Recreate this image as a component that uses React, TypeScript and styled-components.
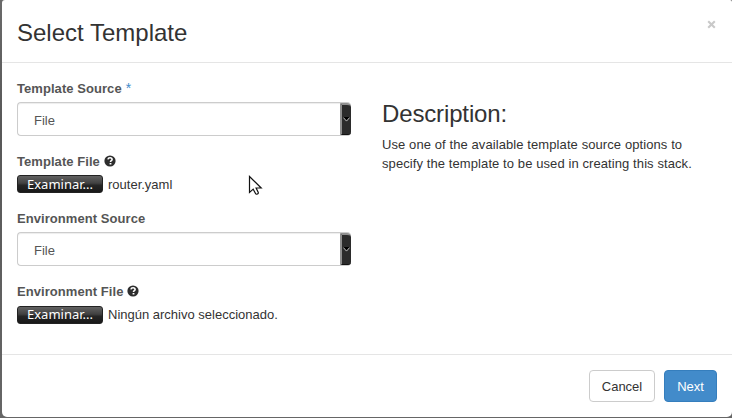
import React from "react";
import styled, { createGlobalStyle } from "styled-components";

const GlobalStyle = createGlobalStyle`
  * { box-sizing: border-box; }
  body {
    margin: 0;
    background: #666;
    font: 13px/19px "Liberation Sans", Arial, sans-serif;
    color: #333;
    overflow: hidden;
  }
`;

const Backdrop = styled.div`
  height: 418px;
  padding: 0 0 1px 2px;
  background: linear-gradient(#6a6a6a, #585858 30%, #666);
`;

const Modal = styled.section`
  position: relative;
  height: 417px;
  display: flex;
  flex-direction: column;
  background: #fff;
  border-radius: 3px 2px 5px 5px;
`;

const Header = styled.header`
  height: 63px;
  padding: 19px 15px 0;
  display: flex;
  justify-content: space-between;
  border-bottom: 1px solid #e5e5e5;
`;

const Title = styled.h3`
  margin: 0;
  font-size: 24px;
  line-height: 27px;
  font-weight: 400;
`;

const CloseButton = styled.button`
  width: 11px;
  height: 11px;
  margin: 0;
  padding: 0;
  border: 0;
  background: none;
  display: flex;
  align-items: center;
  justify-content: center;
`;

const Body = styled.div`
  height: 291px;
  padding: 16px 15px 0;
  display: grid;
  grid-template-columns: 335px 335px;
  column-gap: 30px;
`;

const Field = styled.div<{ $height: number }>`
  height: ${(p) => p.$height}px;
`;

const Label = styled.label`
  height: 23px;
  display: flex;
  gap: 4px;
  font-weight: 700;
  letter-spacing: 0.06px;
  color: #555;
`;

const Required = styled.span`
  color: #428bca;
  font-size: 14px;
  font-weight: 400;
`;

const HelpIcon = styled.svg`
  margin-top: 3px;
`;

const SelectBox = styled.div`
  width: 334px;
  height: 34px;
  display: flex;
  justify-content: space-between;
  border: 1px solid #ccc;
  border-right: 0;
  border-radius: 4px;
  color: #555;
  box-shadow: inset 0 1px 1px rgba(0, 0, 0, 0.075);
`;

const SelectValue = styled.span`
  padding: 8px 0 0 16px;
`;

const SelectArrow = styled.span`
  width: 11px;
  height: 32px;
  display: flex;
  justify-content: center;
  align-items: center;
  background: #2b2b2b;
  border-left: 2px solid #8e8e8e;
  border-top: 2px solid #909090;
  border-bottom: 1px solid #111;
  border-radius: 0 4px 3px 0;
`;

const FileRow = styled.div<{ $raised?: boolean }>`
  height: ${(p) => (p.$raised ? 18 : 19)}px;
  display: flex;
  align-items: center;
  gap: 5px;
`;

const FileName = styled.span`
  line-height: 19px;
`;

const BrowseButton = styled.button`
  width: 86px;
  height: 18px;
  padding: 0;
  border: 1px solid #222;
  border-radius: 3px;
  background: linear-gradient(#626262 0%, #414141 45%, #252525 58%, #191919 100%);
  color: #fff;
  font: 13px/15px "Noto Sans", sans-serif;
`;

const Description = styled.aside`
  padding-top: 21px;
`;

const DescriptionTitle = styled.h3`
  margin: 0 0 8px;
  font-size: 24px;
  line-height: 27px;
  font-weight: 400;
  letter-spacing: -0.14px;
`;

const Text = styled.p`
  margin: 0;
  letter-spacing: 0.09px;
`;

const Footer = styled.footer`
  flex: 1;
  padding: 15px 15px 0;
  display: flex;
  justify-content: flex-end;
  gap: 9px;
  border-top: 1px solid #e5e5e5;
`;

const ActionButton = styled.button<{ $primary?: boolean }>`
  width: ${(p) => (p.$primary ? 53 : 66)}px;
  height: 32px;
  padding: 0;
  border: 1px solid ${(p) => (p.$primary ? "#357ebd" : "#ccc")};
  border-radius: 4px;
  background: ${(p) => (p.$primary ? "#428bca" : "#fff")};
  color: ${(p) => (p.$primary ? "#fff" : "#333")};
  font: 13px/19px "Liberation Sans", Arial, sans-serif;
`;

const Pointer = styled.svg`
  position: absolute;
  left: 246px;
  top: 175px;
`;

const Help = () => (
  <HelpIcon width="12" height="12" viewBox="0 0 12 12">
    <circle cx="6" cy="6" r="5.6" fill="#2d2d2d" />
    <path d="M3.9 4.4C4.2 3.1 5 2.7 6 2.7c1.2 0 2.1.7 2.1 1.7 0 1.3-1.6 1.3-1.6 2.5" fill="none" stroke="#fff" strokeWidth="1.6" />
    <path d="M5.6 8h1.8v1.5H5.6z" fill="#fff" />
  </HelpIcon>
);

const Select = ({ value }: { value: string }) => (
  <SelectBox>
    <SelectValue>{value}</SelectValue>
    <SelectArrow>
      <svg width="7" height="5" viewBox="0 0 7 5">
        <path d="M.5 0h6l-3 3.4z" fill="#000" />
        <path d="m.4.6 3.1 3.5L6.6.6" fill="none" stroke="#ddd" strokeWidth=".8" />
      </svg>
    </SelectArrow>
  </SelectBox>
);

const FileInput = ({ name, raised }: { name: string; raised?: boolean }) => (
  <FileRow $raised={raised}>
    <BrowseButton>Examinar...</BrowseButton>
    <FileName>{name}</FileName>
  </FileRow>
);

export default function App() {
  return (
    <Backdrop>
      <GlobalStyle />
      <Modal>
        <Header>
          <Title>Select Template</Title>
          <CloseButton aria-label="Close">
            <svg width="9" height="9" viewBox="0 0 9 9">
              <path d="m1.2 1.2 6.6 6.6m0-6.6L1.2 7.8" stroke="#c9c9c9" strokeWidth="2.1" />
            </svg>
          </CloseButton>
        </Header>
        <Body>
          <form>
            <Field $height={73}>
              <Label>Template Source <Required>*</Required></Label>
              <Select value="File" />
            </Field>
            <Field $height={57}>
              <Label>Template File <Help /></Label>
              <FileInput name="router.yaml" raised />
            </Field>
            <Field $height={73}>
              <Label>Environment Source</Label>
              <Select value="File" />
            </Field>
            <Field $height={57}>
              <Label>Environment File <Help /></Label>
              <FileInput name="Ningún archivo seleccionado." />
            </Field>
          </form>
          <Description>
            <DescriptionTitle>Description:</DescriptionTitle>
            <Text>Use one of the available template source options to specify the template to be used in creating this stack.</Text>
          </Description>
        </Body>
        <Footer>
          <ActionButton>Cancel</ActionButton>
          <ActionButton $primary>Next</ActionButton>
        </Footer>
        <Pointer width="16" height="22" viewBox="0 0 16 22">
          <path d="M1.5 1.5v16l3.7-3.4 2.3 4.4c.7 1.5 3.4.4 2.7-1.2L8.1 13h5.1z" fill="#fff" stroke="#111" strokeWidth="1.2" />
        </Pointer>
      </Modal>
    </Backdrop>
  );
}
